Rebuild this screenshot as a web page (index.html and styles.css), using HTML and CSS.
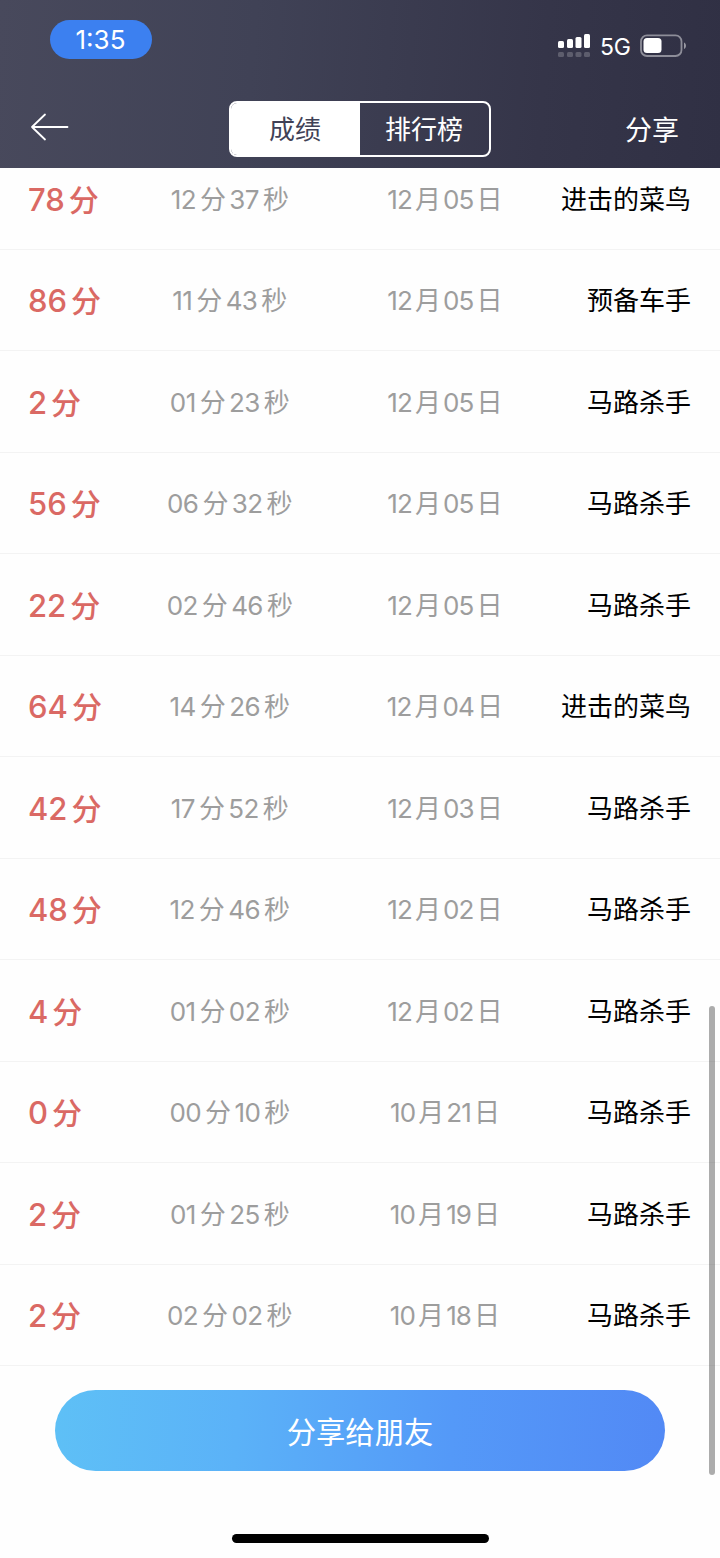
FILE: index.html
```html
<!DOCTYPE html>
<html lang="zh-CN">
<head>
	<meta charset="utf-8">
	<title>成绩</title>
	<link rel="stylesheet" href="styles.css">
</head>
<body>
	<div class="header">
		<div class="status">
			<span class="clock">1:35</span>
			<div class="status-right">
				<svg class="signal" width="32" height="24" viewBox="0 0 32 24">
					<g fill="#fff">
						<rect x="0" y="7" width="6" height="7" rx="1.5"/>
						<rect x="9" y="5" width="6" height="9" rx="1.5"/>
						<rect x="17.5" y="3" width="6" height="11" rx="1.5"/>
						<rect x="26" y="0" width="6" height="14" rx="1.5"/>
					</g>
					<g fill="#fff" opacity=".2">
						<rect x="0" y="18" width="6" height="5" rx="1.5"/>
						<rect x="9" y="18" width="6" height="5" rx="1.5"/>
						<rect x="17.5" y="18" width="6" height="5" rx="1.5"/>
						<rect x="26" y="18" width="6" height="5" rx="1.5"/>
					</g>
				</svg>
				<span class="net">5G</span>
				<svg class="battery" width="47" height="24" viewBox="0 0 47 24">
					<rect x="1" y="1.4" width="40.5" height="20.6" rx="6" fill="none" stroke="#fff" stroke-opacity=".45" stroke-width="1.8"/>
					<rect x="3.5" y="4" width="18" height="15" rx="3.5" fill="#fff"/>
					<path d="M44 8.500c2.600 1 2.600 5.400 0 6.500z" fill="#fff" fill-opacity=".5"/>
				</svg>
			</div>
		</div>
		<div class="nav">
			<svg class="back" width="40" height="30" viewBox="0 0 40 30" fill="none" stroke="#fff" stroke-width="1.8" stroke-linecap="round" stroke-linejoin="round">
				<path d="M16 2.500 3 15l13 12.500M3 15H38.500"/>
			</svg>
			<div class="tabs">
				<span class="tab active">成绩</span>
				<span class="tab">排行榜</span>
			</div>
			<span class="share">分享</span>
		</div>
	</div>

	<div class="list">
		<div class="row"><div class="score">78<i>分</i></div><div class="time">12<i>分</i>37<i>秒</i></div><div class="date">12<i>月</i>05<i>日</i></div><div class="name">进击的菜鸟</div></div>
		<div class="row"><div class="score">86<i>分</i></div><div class="time">11<i>分</i>43<i>秒</i></div><div class="date">12<i>月</i>05<i>日</i></div><div class="name">预备车手</div></div>
		<div class="row"><div class="score">2<i>分</i></div><div class="time">01<i>分</i>23<i>秒</i></div><div class="date">12<i>月</i>05<i>日</i></div><div class="name">马路杀手</div></div>
		<div class="row"><div class="score">56<i>分</i></div><div class="time">06<i>分</i>32<i>秒</i></div><div class="date">12<i>月</i>05<i>日</i></div><div class="name">马路杀手</div></div>
		<div class="row"><div class="score">22<i>分</i></div><div class="time">02<i>分</i>46<i>秒</i></div><div class="date">12<i>月</i>05<i>日</i></div><div class="name">马路杀手</div></div>
		<div class="row"><div class="score">64<i>分</i></div><div class="time">14<i>分</i>26<i>秒</i></div><div class="date">12<i>月</i>04<i>日</i></div><div class="name">进击的菜鸟</div></div>
		<div class="row"><div class="score">42<i>分</i></div><div class="time">17<i>分</i>52<i>秒</i></div><div class="date">12<i>月</i>03<i>日</i></div><div class="name">马路杀手</div></div>
		<div class="row"><div class="score">48<i>分</i></div><div class="time">12<i>分</i>46<i>秒</i></div><div class="date">12<i>月</i>02<i>日</i></div><div class="name">马路杀手</div></div>
		<div class="row"><div class="score">4<i>分</i></div><div class="time">01<i>分</i>02<i>秒</i></div><div class="date">12<i>月</i>02<i>日</i></div><div class="name">马路杀手</div></div>
		<div class="row"><div class="score">0<i>分</i></div><div class="time">00<i>分</i>10<i>秒</i></div><div class="date">10<i>月</i>21<i>日</i></div><div class="name">马路杀手</div></div>
		<div class="row"><div class="score">2<i>分</i></div><div class="time">01<i>分</i>25<i>秒</i></div><div class="date">10<i>月</i>19<i>日</i></div><div class="name">马路杀手</div></div>
		<div class="row"><div class="score">2<i>分</i></div><div class="time">02<i>分</i>02<i>秒</i></div><div class="date">10<i>月</i>18<i>日</i></div><div class="name">马路杀手</div></div>
	</div>

	<div class="footer">
		<button class="share-btn">分享给朋友</button>
		<div class="home-bar"></div>
	</div>
	<div class="scrollbar"></div>
</body>
</html>
```
FILE: styles.css
```css
*{
	margin: 0;
	padding: 0;
	box-sizing: border-box;
}
body{
	position: relative;
	width: 720px;
	height: 1558px;
	overflow: hidden;
	background: #fefefe;
	font-family: Inter, "Noto Sans CJK SC", sans-serif;
	display: flex;
	flex-direction: column;
}
i{
	font-style: normal;
}

/* header */
.header{
	flex: none;
	height: 168px;
	background: linear-gradient(94deg, #48495c 0%, #404256 35%, #353549 75%, #303044 100%);
	color: #fff;
}
.status{
	height: 78px;
	padding: 20px 33px 0 50px;
	display: flex;
	justify-content: space-between;
	align-items: flex-start;
}
.clock{
	width: 102px;
	height: 39px;
	padding-right: 1px;
	line-height: 40px;
	border-radius: 20px;
	background: #3c80f0;
	text-align: center;
	font-size: 26px;
	font-weight: 400;
}
.status-right{
	display: flex;
	padding-top: 14px;
}
.net{
	width: 31px;
	margin: 0 9px 0 10px;
	line-height: 26px;
	font-size: 23px;
	letter-spacing: -0.3px;
}
.nav{
	display: flex;
	justify-content: space-between;
	align-items: center;
	padding: 23px 41px 0 29px;
}
.back{
	margin-top: -4px;
}
.tabs{
	display: flex;
	width: 262px;
	height: 56px;
	margin-left: 25px;
	border: 2px solid #fff;
	border-radius: 8px;
	overflow: hidden;
}
.tab{
	flex: 1;
	padding-top: 2px;
	line-height: 50px;
	text-align: center;
	font-size: 26px;
}
.active{
	background: #fff;
	color: #404156;
}
.share{
	padding-bottom: 2px;
	text-align: right;
	font-size: 27px;
}

/* score list */
.list{
	flex: none;
	height: 1198px;
	display: flex;
	flex-direction: column;
	justify-content: flex-end;
	overflow: hidden;
}
.row{
	flex: none;
	height: 101.5px;
	padding: 0 29px 2px 28px;
	display: grid;
	grid-template-columns: 94px 215px 215px 1fr;
	align-items: center;
	border-bottom: 1px solid #f3f3f3;
	white-space: nowrap;
}
.score{
	padding-top: 1px;
	font-size: 31px;
	font-weight: 500;
	color: #da6964;
}
.score i{
	margin-left: 4px;
	font-size: 30px;
}
.time,.date{
	text-align: center;
	font-size: 26px;
	color: #9d9d9d;
}
.time{
	letter-spacing: -0.6px;
}
.date{
	letter-spacing: -0.9px;
}
.time i{
	margin: 0 4px;
}
.date i{
	margin: 0 3px;
}
.time i:last-child,.date i:last-child{
	margin-right: 0;
}
.name{
	text-align: right;
	font-size: 26px;
	color: #000;
}

/* bottom button */
.footer{
	flex: 1;
	padding-top: 24px;
	display: flex;
	flex-direction: column;
	align-items: center;
}
.share-btn{
	width: 610px;
	height: 81px;
	padding-bottom: 2px;
	border: none;
	border-radius: 41px;
	background: linear-gradient(94deg, #5ec0f6 0%, #5bb2f8 30%, #5499f8 65%, #5289f5 100%);
	color: #fff;
	font: 29.3px Inter, "Noto Sans CJK SC", sans-serif;
}
.home-bar{
	width: 257px;
	height: 9px;
	margin-top: 63px;
	border-radius: 5px;
	background: #000;
}
.scrollbar{
	position: absolute;
	top: 1006px;
	right: 5px;
	width: 6px;
	height: 469px;
	border-radius: 3px;
	background: rgba(0,0,0,.32);
}
```
